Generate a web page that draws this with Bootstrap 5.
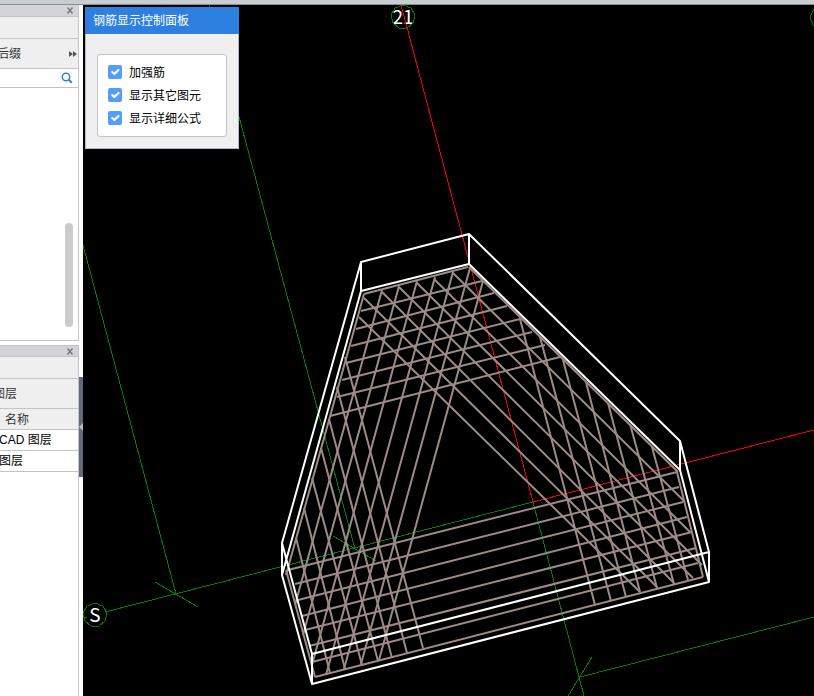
<!DOCTYPE html>
<html lang="zh-CN">
<head>
<meta charset="utf-8">
<meta name="viewport" content="width=device-width, initial-scale=1">
<title>钢筋显示控制面板</title>
<link rel="stylesheet" href="https://cdn.jsdelivr.net/npm/bootstrap@5.3.0/dist/css/bootstrap.min.css">
<style>
  body { font-family: "Liberation Sans", "Noto Sans CJK SC", sans-serif; font-size: 12px; line-height: 16px; color: #000; }
  .topbar { height: 5px; background: #c8cdd2; border-bottom: 1px solid #8a8f96; }
  .sidebar { width: 79px; background: #fff; }
  .dock { border-right: 1px solid #c3c3cb; }
  .dock-upper { height: 336px; border-bottom: 1px solid #c3c3cb; }
  .dock-title { height: 12px; padding-right: 3px; background: #d3d4da; border-bottom: 1px solid #c3c3cb; }
  .dock-lower .dock-title { border-top: 1px solid #c3c3cb; }
  .strip { background: #efefef; border-bottom: 1px solid #c3c3cb; color: #333; }
  .h-tab { height: 22px; }
  .h-tool { height: 30px; }
  .h-search { height: 19px; border-bottom: 1px solid #c3c3cb; }
  .plain { border: 0; background: none; padding: 0; color: inherit; line-height: 16px; white-space: nowrap; }
  .plain svg, .h-search svg { display: block; }
  .scrolled-a { margin-left: -3px; }
  .scrolled-b { margin-left: -7px; }
  .search-box { min-width: 0; border: 0; outline: 0; padding: 0 4px; background: transparent; }
  .scroll-thumb { width: 8px; height: 104px; border-radius: 4px; background: #cbcbcb; margin: 135px 5px 0 auto; }
  .layers td, .layers th { height: 21px; padding: 0; border-bottom: 1px solid #c3c3cb; font-weight: 400; white-space: nowrap; }
  .layers td { text-indent: -1px; }
  .layers th { height: 20px; background: #efefef; color: #333; padding: 2px 0 0 5px; }
  .splitter { width: 4px; background: #fff; }
  .splitter-grip { height: 100px; margin-top: 372px; background: #5f6b79; }
  .viewport { background: #000; min-width: 0; }
  .scene { display: block; width: 100%; height: 100%; }
  .float-panel { top: 2px; left: 2px; width: 154px; background: #efefef; border: 1px solid #b4b9cb; border-top: 0; }
  .float-title { height: 27px; margin: 0 -1px; padding: 0 8px; background: #2d7fe0; color: #fff; }
  .option-box { margin: 20px 11px 11px; padding: 6px 10px; background: #fff; border: 1px solid #c3c3cb; border-radius: 3px; }
  .option-row { height: 23px; gap: 7px; }
  .option-row .form-check-input { width: 14px; height: 14px; margin: 0 0 1px; border: 0; border-radius: 2px; background-color: #549df8; flex: none; }
</style>
<script src="https://cdn.jsdelivr.net/npm/bootstrap@5.3.0/dist/js/bootstrap.bundle.min.js"></script>
</head>
<body class="vh-100 d-flex flex-column overflow-hidden">
<header class="topbar flex-shrink-0"></header>
<div class="d-flex flex-grow-1 overflow-hidden">
  <aside class="sidebar d-flex flex-column flex-shrink-0 overflow-hidden">
    <section class="dock dock-upper flex-shrink-0">
      <div class="dock-title d-flex align-items-center justify-content-end">
        <button class="plain" type="button" aria-label="关闭"><svg width="9" height="7" viewBox="0 0 9 7"><path d="M1.500 .5l5 6M6.500 .5l-5 6" stroke="#777" stroke-width="1.400"/></svg></button>
      </div>
      <div class="strip h-tab"></div>
      <div class="strip h-tool d-flex align-items-center justify-content-between">
        <button class="plain scrolled-a" type="button">后缀</button>
        <button class="plain" type="button" aria-label="更多"><svg width="9" height="6" viewBox="0 0 9 6"><path d="M0 0l4 3-4 3zM4 0l4 3-4 3z" fill="#555"/></svg></button>
      </div>
      <div class="h-search d-flex align-items-center pe-1">
        <input class="search-box flex-fill" type="text" aria-label="搜索">
        <svg class="flex-shrink-0" width="13" height="12" viewBox="0 0 13 12"><circle cx="5" cy="5" r="3.700" fill="none" stroke="#2b88c0" stroke-width="1.500"/><path d="M7.800 7.800l3 3" stroke="#2b88c0" stroke-width="2"/></svg>
      </div>
      <div class="scroll-thumb"></div>
    </section>
    <section class="dock dock-lower flex-grow-1 mt-1">
      <div class="dock-title d-flex align-items-center justify-content-end">
        <button class="plain" type="button" aria-label="关闭"><svg width="9" height="7" viewBox="0 0 9 7"><path d="M1.500 .5l5 6M6.500 .5l-5 6" stroke="#777" stroke-width="1.400"/></svg></button>
      </div>
      <div class="strip h-tab"></div>
      <div class="strip h-tool d-flex align-items-center"><button class="plain scrolled-b" type="button">图层</button></div>
      <table class="layers w-100">
        <thead><tr><th scope="col">名称</th></tr></thead>
        <tbody><tr><td>CAD 图层</td></tr><tr><td>图层</td></tr></tbody>
      </table>
    </section>
  </aside>
  <div class="splitter flex-shrink-0">
    <div class="splitter-grip d-flex align-items-center"><svg width="4" height="8" viewBox="0 0 4 8"><path d="M4 0v8L0 4z" fill="#b8bdc4"/></svg></div>
  </div>
  <main class="viewport flex-grow-1 position-relative overflow-hidden">
    <svg class="scene" viewBox="83 5 731 691" preserveAspectRatio="xMinYMin slice" fill="none" role="img" aria-label="钢筋三维视图">
      <!-- axis labels -->
      <g fill="#fff" font-family="Noto Sans CJK SC, sans-serif" font-size="19" text-anchor="middle">
        <text x="403" y="24">21</text>
        <text x="95" y="622">S</text>
      </g>
      <!-- axis grid -->
      <g stroke="#008000" shape-rendering="crispEdges">
        <path d="M105 612L533 502L584 696M83 618L87 617M580 677L814 617M592 657L568 696M209 5L355 549M83 245L176 594M155 582L198 607M333 536L376 561"/>
        <path d="M95 603l8 3 4 7-2 8-6 5-8 0-6-5-2-8 4-7zM403 5l8 3 4 7-2 8-6 5-8 0-6-5-2-8 4-7zM822 5l-8 4-4 8 3 8 9 4"/>
      </g>
      <path stroke="#f00000" shape-rendering="crispEdges" d="M401 5L533 502L814 430"/>
      <!-- reinforcement bars -->
      <g stroke="#9c8c87" stroke-width="2">
        <path d="M364 294L468 267M361 311L482 281M356 329L494 293M351 346L507 306M346 363L520 319M342 380L532 332M337 397L545 345M330 416L560 357"/>
        <path d="M364 294L286 575M382 290L295 605M399 286L303 635M417 281L312 665M435 277L326 675M453 272L344 669M470 268L361 664M483 281L379 660"/>
        <path d="M469 267L678 472M453 273L685 502M434 279L690 532M417 283L702 565M399 287L693 578M382 292L674 583M364 298L657 587M359 317L640 592"/>
        <path d="M520 319L595 605M540 337L611 601M563 360L626 597M586 382L640 592M608 403L657 588M630 424L674 584M652 447L688 580M677 472L703 577"/>
        <path d="M288 570L677 472M295 584L679 487M298 600L683 502M302 616L687 517M305 630L692 532M309 646L696 548M312 662L698 563M315 677L703 577"/>
        <path d="M345 357L423 648M337 387L407 653M329 419L392 658M321 448L378 661M312 478L362 665M304 508L345 669M296 538L330 673M286 570L315 677"/>
      </g>
      <!-- slab outline -->
      <path stroke="#fff" stroke-width="2" stroke-linejoin="round" d="M361 262L469 234L680 441L709 552L312 654L282 543ZM361 291L469 264L680 470L709 582L312 684L282 575ZM361 262V291M469 234V264M680 441V470M709 552V582M312 654V684M282 543V575"/>
    </svg>
    <section class="float-panel position-absolute">
      <div class="float-title d-flex align-items-center">钢筋显示控制面板</div>
      <div class="option-box">
        <div class="option-row d-flex align-items-center"><input class="form-check-input" type="checkbox" id="optStrong" checked><label for="optStrong">加强筋</label></div>
        <div class="option-row d-flex align-items-center"><input class="form-check-input" type="checkbox" id="optOther" checked><label for="optOther">显示其它图元</label></div>
        <div class="option-row d-flex align-items-center"><input class="form-check-input" type="checkbox" id="optFormula" checked><label for="optFormula">显示详细公式</label></div>
      </div>
    </section>
  </main>
</div>
</body>
</html>
